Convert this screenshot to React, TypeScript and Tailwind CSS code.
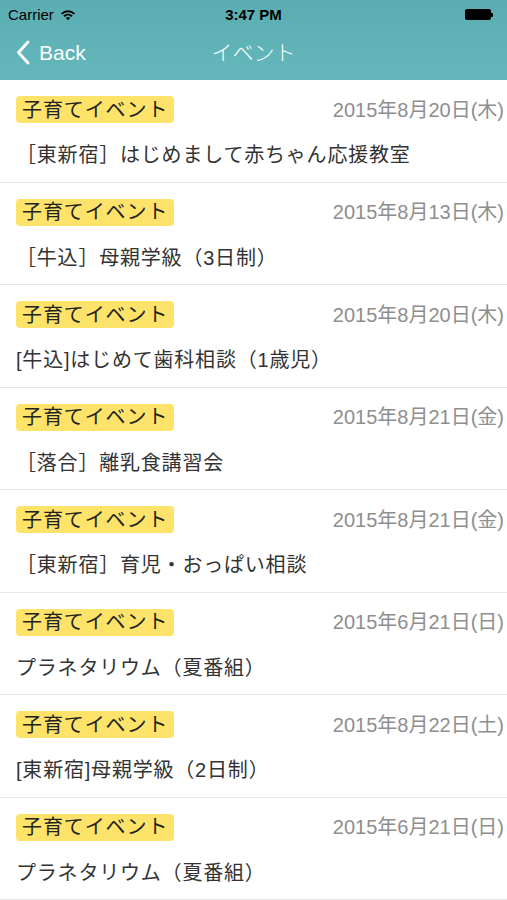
import React from "react"

const events = [
  { date: "2015年8月20日(木)", title: "［東新宿］はじめまして赤ちゃん応援教室" },
  { date: "2015年8月13日(木)", title: "［牛込］母親学級（3日制）" },
  { date: "2015年8月20日(木)", title: "[牛込]はじめて歯科相談（1歳児）" },
  { date: "2015年8月21日(金)", title: "［落合］離乳食講習会" },
  { date: "2015年8月21日(金)", title: "［東新宿］育児・おっぱい相談" },
  { date: "2015年6月21日(日)", title: "プラネタリウム（夏番組）" },
  { date: "2015年8月22日(土)", title: "[東新宿]母親学級（2日制）" },
  { date: "2015年6月21日(日)", title: "プラネタリウム（夏番組）" },
]

const font = "font-['Liberation_Sans','Noto_Sans_CJK_JP',sans-serif]"

function StatusBar() {
  return (
    <div className="h-[29px] flex items-center justify-between px-[8px] text-black relative">
      <div className="flex items-center gap-[6px] text-[15px] leading-none">
        <span>Carrier</span>
        {/* wifi */}
        <svg width="16" height="12" viewBox="0 0 16 12">
          <path d="M1 4.2a10 10 0 0 1 14 0l-1.3 1.3a8.2 8.2 0 0 0-11.4 0z" fill="#000" />
          <path d="M3.4 6.6a6.6 6.6 0 0 1 9.2 0l-1.3 1.3a4.8 4.8 0 0 0-6.6 0z" fill="#000" />
          <path d="M5.8 9a3.1 3.1 0 0 1 4.4 0L8 11.2z" fill="#000" />
        </svg>
      </div>
      <span className="absolute left-1/2 -translate-x-1/2 text-[15px] font-bold leading-none">3:47 PM</span>
      <div className="flex items-center mr-[6px]">
        <div className="w-[26px] h-[11px] bg-black rounded-[2px]" />
        <div className="w-[2px] h-[4px] bg-black rounded-r-[1px]" />
      </div>
    </div>
  )
}

function NavBar() {
  return (
    <div className="h-[51px] flex items-center relative text-white pb-[4px]">
      <div className="flex items-center pl-[16px] gap-[9px]">
        <svg width="14" height="25" viewBox="0 0 14 25">
          <path d="M12 2 2.5 12.5 12 23" fill="none" stroke="#fff" strokeWidth="2.8" strokeLinecap="round" strokeLinejoin="round" />
        </svg>
        <span className="text-[21px] leading-none">Back</span>
      </div>
      <span className="absolute left-1/2 top-[13px] -translate-x-1/2 text-[21px] leading-none font-light">イベント</span>
    </div>
  )
}

export default function App() {
  return (
    <div className={`w-[507px] h-[900px] overflow-hidden bg-white ${font}`}>
      <div className="bg-gradient-to-b from-[#5aaeb2] to-[#64b7ba]">
        <StatusBar />
        <NavBar />
      </div>
      <div className="flex flex-col">
        {events.map((ev, i) => (
          <div key={i} className="h-[102.5px] border-b border-[#e6e6e6] flex flex-col pl-[16px] pr-[3px] pt-[16px]">
            <div className="flex items-center justify-between">
              <span className="bg-[#fde36a] rounded-[4px] px-[6px] h-[27px] flex items-center text-[20px] leading-none tracking-[0.9px] text-[#222]">
                子育てイベント
              </span>
              <span className="text-[20px] leading-none text-[#8e8e8e]">{ev.date}</span>
            </div>
            <div className="mt-[22px] text-[20px] leading-none tracking-[0.8px] text-[#333]">{ev.title}</div>
          </div>
        ))}
      </div>
    </div>
  )
}
